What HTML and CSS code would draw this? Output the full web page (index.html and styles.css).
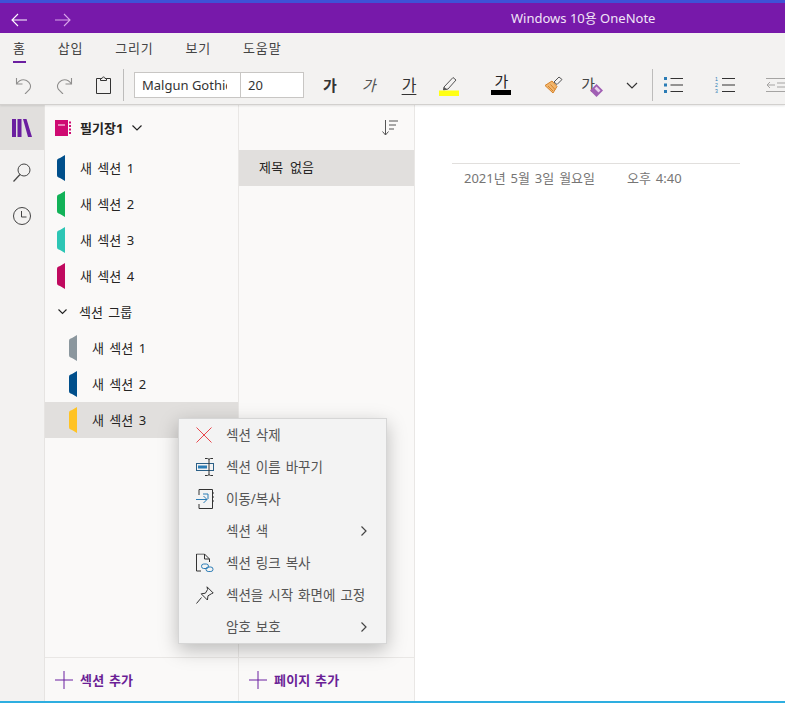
FILE: index.html
```html
<!DOCTYPE html>
<html lang="ko">
<head>
  <meta charset="UTF-8" />
  <title>Windows 10용 OneNote</title>
  <link rel="stylesheet" href="styles.css">
</head>
<body>
  <div class="app">

    <!-- 제목 표시줄 -->
    <div class="titlebar">
      <svg class="nav-arrow" width="16" height="14" viewBox="0 0 16 14"><path d="M7 1L1 7l6 6M1 7h15" fill="none" stroke="#fff" stroke-width="1.1"/></svg>
      <svg class="nav-arrow" width="16" height="14" viewBox="0 0 16 14"><path d="M9 1l6 6-6 6M15 7H0" fill="none" stroke="#d9a6ea" stroke-width="1.1"/></svg>
      <span class="app-title">Windows 10용 OneNote</span>
    </div>

    <!-- 리본 -->
    <div class="ribbon">
      <div class="tabs">
        <span class="tab active">홈</span>
        <span class="tab">삽입</span>
        <span class="tab">그리기</span>
        <span class="tab">보기</span>
        <span class="tab">도움말</span>
      </div>
      <div class="tools">
        <svg class="tool t-undo" width="18" height="18" viewBox="0 0 18 18"><path d="M1.500 2v6h6M1.500 8C4 4.500 8 3 11.500 4.500c4 2 5 6 3 9L10 18" fill="none" stroke="#8f8e8d" stroke-width="1.1"/></svg>
        <svg class="tool t-redo" width="18" height="18" viewBox="0 0 18 18"><path d="M16.500 2v6h-6M16.500 8C14 4.500 10 3 6.500 4.500c-4 2-5 6-3 9L8 18" fill="none" stroke="#8f8e8d" stroke-width="1.1"/></svg>
        <svg class="tool t-paste" width="15" height="18" viewBox="0 0 15 18"><path d="M4.500 2.500H.5v15h14v-15h-4M4.500 4.500v-2h1.500c0-2 3-2 3 0h1.500v2z" fill="none" stroke="#333" stroke-width="1"/></svg>
        <span class="vsep first"></span>
        <div class="font-box">
          <span class="font-name"><span class="font-clip">Malgun Gothic</span></span>
          <span class="font-size">20</span>
        </div>
        <span class="glyph bold">가</span>
        <span class="glyph italic">가</span>
        <span class="glyph under">가</span>
        <svg class="tool t-mark" width="20" height="20" viewBox="0 0 20 20"><path d="M5 11L14 1.500l3 2.500-8 9-4.500 1z" fill="none" stroke="#555" stroke-width="1"/><path d="M5 11l3.500 2.500-4 .5z" fill="#555"/><rect y="14.500" width="20" height="5.500" fill="#ffff14"/></svg>
        <div class="font-color">
          <span class="color-glyph">가</span>
          <span class="color-bar"></span>
        </div>
        <svg class="tool t-brush" width="19" height="18" viewBox="0 0 19 18"><path d="M1 9.500L8 5l5 5.500L9 17z" fill="#f2b66d" stroke="#d5832b" stroke-width="1"/><path d="M10 6l5-5 3 2.500-5 5z" fill="none" stroke="#555" stroke-width="1"/><path d="M4 10l5 5M6.500 8.500l4.500 5" stroke="#d5832b" stroke-width="1"/></svg>
        <div class="clear-fmt">
          <span class="clear-glyph">가</span>
          <svg class="eraser" width="13" height="13" viewBox="0 0 13 13"><path d="M6.500 0L13 6.500 6.500 13 0 6.500z" fill="#a05fb3"/><path d="M6.500 2.500l4 4-2 2-4-4z" fill="#e7d3ec"/></svg>
        </div>
        <svg class="tool t-chev" width="12" height="7" viewBox="0 0 12 7"><path d="M1 1l5 5 5-5" fill="none" stroke="#333" stroke-width="1.200"/></svg>
        <span class="vsep second"></span>
        <svg class="tool t-bul" width="19" height="18" viewBox="0 0 19 18"><path d="M0 1h3v3H0zM0 7.500h3v3H0zM0 14h3v3H0z" fill="#2b7cb5"/><path d="M6.500 2.500H19M6.500 9H19M6.500 15.500H19" stroke="#333" stroke-width="1"/></svg>
        <svg class="tool t-num" width="21" height="18" viewBox="0 0 21 18"><text x="1" y="5.200" class="num-text">1</text><text x="1" y="11.200" class="num-text">2</text><text x="1" y="17.200" class="num-text">3</text><path d="M8 2.500h13M8 9h13M8 15.500h13" stroke="#333" stroke-width="1"/></svg>
        <svg class="tool t-out" width="19" height="18" viewBox="0 0 19 18"><path d="M0 2.500h19M11 7h8M11 11h8M0 15.500h19" stroke="#a5a4a3" stroke-width="1"/><path d="M4 6L1 9l3 3M1 9h8" fill="none" stroke="#a5a4a3" stroke-width="1"/></svg>
      </div>
    </div>

    <div class="main">
      <!-- 왼쪽 아이콘 -->
      <div class="rail">
        <div class="rail-btn on">
          <svg width="20" height="18" viewBox="0 0 20 18"><path d="M0 0h4v18H0zM5.500 0h4v18h-4zM11 0h3.500L20 18h-4z" fill="#6b1fa0"/></svg>
        </div>
        <div class="rail-btn">
          <svg width="18" height="19" viewBox="0 0 18 19"><circle cx="11" cy="7" r="6" fill="none" stroke="#444" stroke-width="1"/><path d="M7 11.500L.5 18.500" stroke="#444" stroke-width="1.200"/></svg>
        </div>
        <div class="rail-btn">
          <svg width="18" height="18" viewBox="0 0 18 18"><circle cx="9" cy="9" r="8.500" fill="none" stroke="#444" stroke-width="1"/><path d="M8.500 4v6h5" fill="none" stroke="#444" stroke-width="1"/></svg>
        </div>
      </div>

      <!-- 섹션 목록 -->
      <div class="sections">
        <div class="nb-head">
          <svg width="16" height="16" viewBox="0 0 16 16"><path d="M0 0h13v16H0z" fill="#cf0a72"/><path d="M14 1.500h2v2h-2zM14 5h2v2h-2zM14 8.500h2v2h-2zM14 12h2v2h-2z" fill="#cf0a72"/><path d="M3 5h7" stroke="#fff" stroke-width="1"/></svg>
          <span class="nb-name">필기장1</span>
          <svg width="10" height="6" viewBox="0 0 10 6"><path d="M.5.500L5 5 9.500.500" fill="none" stroke="#222" stroke-width="1.200"/></svg>
        </div>
        <div class="sec-list">
          <div class="sec"><span class="tab-mark c-blue"></span>새 섹션 1</div>
          <div class="sec"><span class="tab-mark c-green"></span>새 섹션 2</div>
          <div class="sec"><span class="tab-mark c-teal"></span>새 섹션 3</div>
          <div class="sec"><span class="tab-mark c-pink"></span>새 섹션 4</div>
          <div class="sec group">
            <svg width="9" height="6" viewBox="0 0 9 6"><path d="M.5.500L4.500 4.500 8.500.500" fill="none" stroke="#222" stroke-width="1.100"/></svg>
            <span>섹션 그룹</span>
          </div>
          <div class="sec sub"><span class="tab-mark c-gray"></span>새 섹션 1</div>
          <div class="sec sub"><span class="tab-mark c-blue"></span>새 섹션 2</div>
          <div class="sec sub picked"><span class="tab-mark c-yellow"></span>새 섹션 3</div>
        </div>
        <div class="add-row">
          <svg width="18" height="18" viewBox="0 0 18 18"><path d="M9 0v18M0 9h18" stroke="#6b1fa0" stroke-width="1"/></svg>
          <span>섹션 추가</span>
        </div>
      </div>

      <!-- 페이지 목록 -->
      <div class="pages">
        <div class="pages-head">
          <svg width="16" height="16" viewBox="0 0 16 16"><path d="M3.500 0v15M.5 11.500l3 3.500 3-3.500M7 1h9M7 5h7M7 9h5" fill="none" stroke="#555" stroke-width="1"/></svg>
        </div>
        <div class="page-list">
          <div class="page-item">제목 없음</div>
        </div>
        <div class="add-row">
          <svg width="18" height="18" viewBox="0 0 18 18"><path d="M9 0v18M0 9h18" stroke="#6b1fa0" stroke-width="1"/></svg>
          <span>페이지 추가</span>
        </div>
      </div>

      <!-- 본문 -->
      <div class="note">
        <div class="note-date">
          <span>2021년 5월 3일 월요일</span>
          <span>오후 4:40</span>
        </div>
      </div>
    </div>

    <div class="bottom-line"></div>

    <!-- 컨텍스트 메뉴 -->
    <div class="menu">
      <div class="mi">
        <svg class="mi-ico" width="16" height="16" viewBox="0 0 16 16"><path d="M.5.500l15 15M15.500.500l-15 15" stroke="#e8474c" stroke-width="1"/></svg>
        <span class="mi-label">섹션 삭제</span>
      </div>
      <div class="mi">
        <svg class="mi-ico" width="19" height="18" viewBox="0 0 19 18"><rect x=".5" y="5.500" width="17" height="7" fill="none" stroke="#2b5f86" stroke-width="1"/><rect x="2" y="7.500" width="9" height="3" fill="#2b7cb5"/><path d="M9 .5h2.500c1 0 1.500 .5 1.500 1.500v14c0 1-.5 1.500-1.500 1.500H9M17 .5h-2.500c-1 0-1.500 .5-1.500 1.500M13 16c0 1 .5 1.500 1.500 1.500H17" fill="none" stroke="#333" stroke-width="1"/></svg>
        <span class="mi-label">섹션 이름 바꾸기</span>
      </div>
      <div class="mi">
        <svg class="mi-ico" width="18" height="20" viewBox="0 0 18 20"><path d="M3 6V.5h13.500v19H3V15" fill="none" stroke="#333" stroke-width="1"/><path d="M16.500 4h1.500M16.500 8h1.500M16.500 12h1.500" stroke="#333"/><path d="M0 10.500h11M7.500 7l3.500 3.500L7.500 14M7 5h5v5" fill="none" stroke="#2b7cb5" stroke-width="1"/></svg>
        <span class="mi-label">이동/복사</span>
      </div>
      <div class="mi">
        <span class="mi-ico"></span>
        <span class="mi-label">섹션 색</span>
        <svg class="mi-arrow" width="6" height="10" viewBox="0 0 6 10"><path d="M.5.500L5 5 .5 9.500" fill="none" stroke="#444" stroke-width="1.200"/></svg>
      </div>
      <div class="mi">
        <svg class="mi-ico" width="18" height="19" viewBox="0 0 18 19"><path d="M5 17.500H.5V.5h8l5 5v3M8.500.500v5h5" fill="none" stroke="#333" stroke-width="1"/><rect x="5.500" y="10.500" width="7" height="4.500" rx="2.200" fill="none" stroke="#2b7cb5"/><rect x="10" y="13.500" width="7" height="4.500" rx="2.200" fill="none" stroke="#2b7cb5"/></svg>
        <span class="mi-label">섹션 링크 복사</span>
      </div>
      <div class="mi">
        <svg class="mi-ico" width="18" height="18" viewBox="0 0 18 18"><path d="M11 .8l6.200 6.200-1.500.6-3.700 2.200-.6 4.200-6.200-6.200 4.200-.6 2.200-3.700zM5.500 11.500L.5 17.500" fill="none" stroke="#333" stroke-width="1"/></svg>
        <span class="mi-label">섹션을 시작 화면에 고정</span>
      </div>
      <div class="mi">
        <span class="mi-ico"></span>
        <span class="mi-label">암호 보호</span>
        <svg class="mi-arrow" width="6" height="10" viewBox="0 0 6 10"><path d="M.5.500L5 5 .5 9.500" fill="none" stroke="#444" stroke-width="1.200"/></svg>
      </div>
    </div>

  </div>
</body>
</html>
```

FILE: styles.css
```css
* {
  box-sizing: border-box;
}

html, body {
  margin: 0;
  height: 100%;
  overflow: hidden;
}

body {
  font-family: "Noto Sans", "Noto Sans CJK KR", sans-serif;
  font-size: 13px;
  color: #252423;
  background-color: #fff;
}

svg {
  display: block;
  flex: none;
}

.app {
  position: relative;
  display: flex;
  flex-direction: column;
  height: 703px;
  width: 785px;
}

/* title bar */
.titlebar {
  height: 33px;
  flex: none;
  display: flex;
  align-items: center;
  gap: 28px;
  padding: 3px 0 0 11px;
  background-color: #7719aa;
  border-top: 3px solid #3f51d6;
  position: relative;
}

.app-title {
  position: absolute;
  left: 511px;
  top: 5px;
  color: #f1e4f7;
  font-size: 13px;
  line-height: 20px;
}

/* ribbon */
.ribbon {
  height: 72px;
  flex: none;
  background-color: #f3f2f1;
  border-bottom: 1px solid #d2d0ce;
  box-shadow: 0 1px 2px rgba(0,0,0,0.1);
  position: relative;
  z-index: 2;
}

.tabs {
  display: flex;
  height: 30px;
  padding-left: 13px;
  gap: 32px;
}

.tab {
  height: 30px;
  line-height: 31px;
  font-size: 13px;
  letter-spacing: .8px;
  color: #444;
  position: relative;
}

.tab.active {
  color: #333;
}

.tab.active::after {
  content: "";
  position: absolute;
  left: 0;
  right: 0;
  bottom: 0;
  height: 2px;
  background-color: #6b1fa0;
}

.tools {
  display: flex;
  align-items: center;
  height: 41px;
  padding: 3px 0 0 15px;
}

.tool {
  flex: none;
}

.t-redo { margin-left: 22px; }
.t-paste { margin-left: 23px; }

.vsep {
  width: 1px;
  height: 32px;
  background-color: #bdbcbb;
  flex: none;
}

.vsep.first { margin-left: 12px; margin-right: 10px; }
.vsep.second { margin-left: 14px; margin-right: 11px; }

.font-box {
  display: flex;
  height: 26px;
  width: 170px;
  background-color: #fff;
  border: 1px solid #c8c6c4;
  font-size: 13px;
  line-height: 24px;
  flex: none;
}

.font-name {
  width: 106px;
  padding: 0 13px 0 7px;
  border-right: 1px solid #c8c6c4;
  flex: none;
  color: #333;
}

.font-clip {
  display: block;
  overflow: hidden;
  white-space: nowrap;
}

.font-size {
  padding-left: 7px;
  color: #333;
}

.glyph {
  font-size: 15px;
  color: #333;
  flex: none;
  line-height: 20px;
}

.glyph.bold { font-weight: 700; margin-left: 19px; }
.glyph.italic { font-style: italic; margin-left: 25px; color: #555; }
.glyph.under { font-size: 16px; margin-left: 26px; text-decoration: underline; text-decoration-thickness: 1px; text-underline-offset: 3px; }

.t-mark { margin-left: 23px; margin-top: 1px; }

.font-color {
  display: flex;
  flex-direction: column;
  align-items: center;
  width: 20px;
  margin: 0 0 2px 32px;
  flex: none;
}

.color-glyph {
  font-size: 15px;
  line-height: 17px;
}

.color-bar {
  width: 20px;
  height: 5px;
  background-color: #000;
}

.t-brush { margin-left: 33px; }

.clear-fmt {
  position: relative;
  width: 22px;
  height: 22px;
  margin-left: 18px;
  flex: none;
}

.clear-glyph {
  font-size: 15px;
  line-height: 20px;
  color: #444;
}

.eraser {
  position: absolute;
  left: 9px;
  top: 10px;
}

.t-chev { margin-left: 23px; }
.t-bul { margin-right: 31px; }
.t-out { margin-left: 31px; }

.num-text {
  font-size: 5.200px;
  fill: #2b7cb5;
  font-family: "Liberation Sans", sans-serif;
}

/* main area */
.main {
  flex: 1;
  display: flex;
  min-height: 0;
}

.rail {
  width: 45px;
  flex: none;
  background-color: #f3f2f1;
  border-right: 1px solid #e6e4e2;
}

.rail-btn {
  height: 44px;
  display: flex;
  align-items: center;
  justify-content: center;
}

.rail-btn.on {
  height: 45px;
  background-color: #e1dfdd;
}

.sections, .pages {
  display: flex;
  flex-direction: column;
  background-color: #faf9f8;
  border-right: 1px solid #e9e7e5;
  flex: none;
}

.sections { width: 194px; }
.pages { width: 176px; }

.nb-head {
  height: 45px;
  flex: none;
  display: flex;
  align-items: center;
  padding-left: 10px;
  gap: 9px;
}

.nb-name {
  font-weight: 700;
  font-size: 13px;
  color: #252423;
}

.sec-list, .page-list {
  flex: 1;
  min-height: 0;
}

.sec {
  height: 36px;
  display: flex;
  align-items: center;
  padding: 0 0 2px 12px;
  font-size: 13px;
  word-spacing: 2px;
  white-space: nowrap;
}

.sec.sub { padding-left: 24px; }
.sec.picked { background-color: #e1dfdd; }

.sec.group svg {
  margin: 2px 12px 0 1px;
}

.tab-mark {
  width: 8px;
  height: 26px;
  margin: 0 15px -2px 0;
  clip-path: path("M8 0V26L3 23C1 22.500 0 22 0 20V6C0 4 1 3.500 3 3Z");
  flex: none;
}

.c-blue { background-color: #004f8b; }
.c-green { background-color: #12b258; }
.c-teal { background-color: #2dc6b5; }
.c-pink { background-color: #c00a5f; }
.c-gray { background-color: #8b979e; }
.c-yellow { background-color: #ffc324; }

.add-row {
  height: 44px;
  flex: none;
  display: flex;
  align-items: center;
  gap: 7px;
  padding-left: 10px;
  border-top: 1px solid #e9e7e5;
  color: #6b1f96;
  font-weight: 700;
  font-size: 13px;
  word-spacing: 1px;
  letter-spacing: .2px;
}

.pages-head {
  height: 45px;
  flex: none;
  display: flex;
  align-items: center;
  justify-content: flex-end;
  padding-right: 16px;
}

.page-item {
  height: 36px;
  line-height: 34px;
  padding-left: 20px;
  font-size: 13px;
  word-spacing: 3px;
  letter-spacing: .2px;
  background-color: #e1dfdd;
}

/* note page */
.note {
  flex: 1;
  background-color: #fff;
  padding: 58px 45px 0 37px;
}

.note-date {
  border-top: 1px solid #e1dfdd;
  padding: 5px 0 0 12px;
  display: flex;
  gap: 32px;
  font-size: 13px;
  word-spacing: 1.500px;
  line-height: 18px;
  color: #767574;
}

.bottom-line {
  height: 2px;
  flex: none;
  background-color: #2eaee0;
}

/* context menu */
.menu {
  position: absolute;
  left: 178px;
  top: 418px;
  width: 209px;
  height: 226px;
  padding-top: 0;
  background-color: #f3f3f3;
  border: 1px solid #d6d6d6;
  box-shadow: 0 6px 18px rgba(0,0,0,0.25);
  z-index: 5;
}

.mi {
  height: 32px;
  display: flex;
  align-items: center;
  position: relative;
  color: #555;
  font-size: 13.500px;
  word-spacing: 1.500px;
  white-space: nowrap;
}

.mi-ico {
  position: absolute;
  left: 17px;
  top: 50%;
  transform: translateY(-50%);
}

.mi-label {
  margin: 0 0 2px 47px;
}

.mi-arrow {
  position: absolute;
  right: 19px;
  top: 11px;
}
```
